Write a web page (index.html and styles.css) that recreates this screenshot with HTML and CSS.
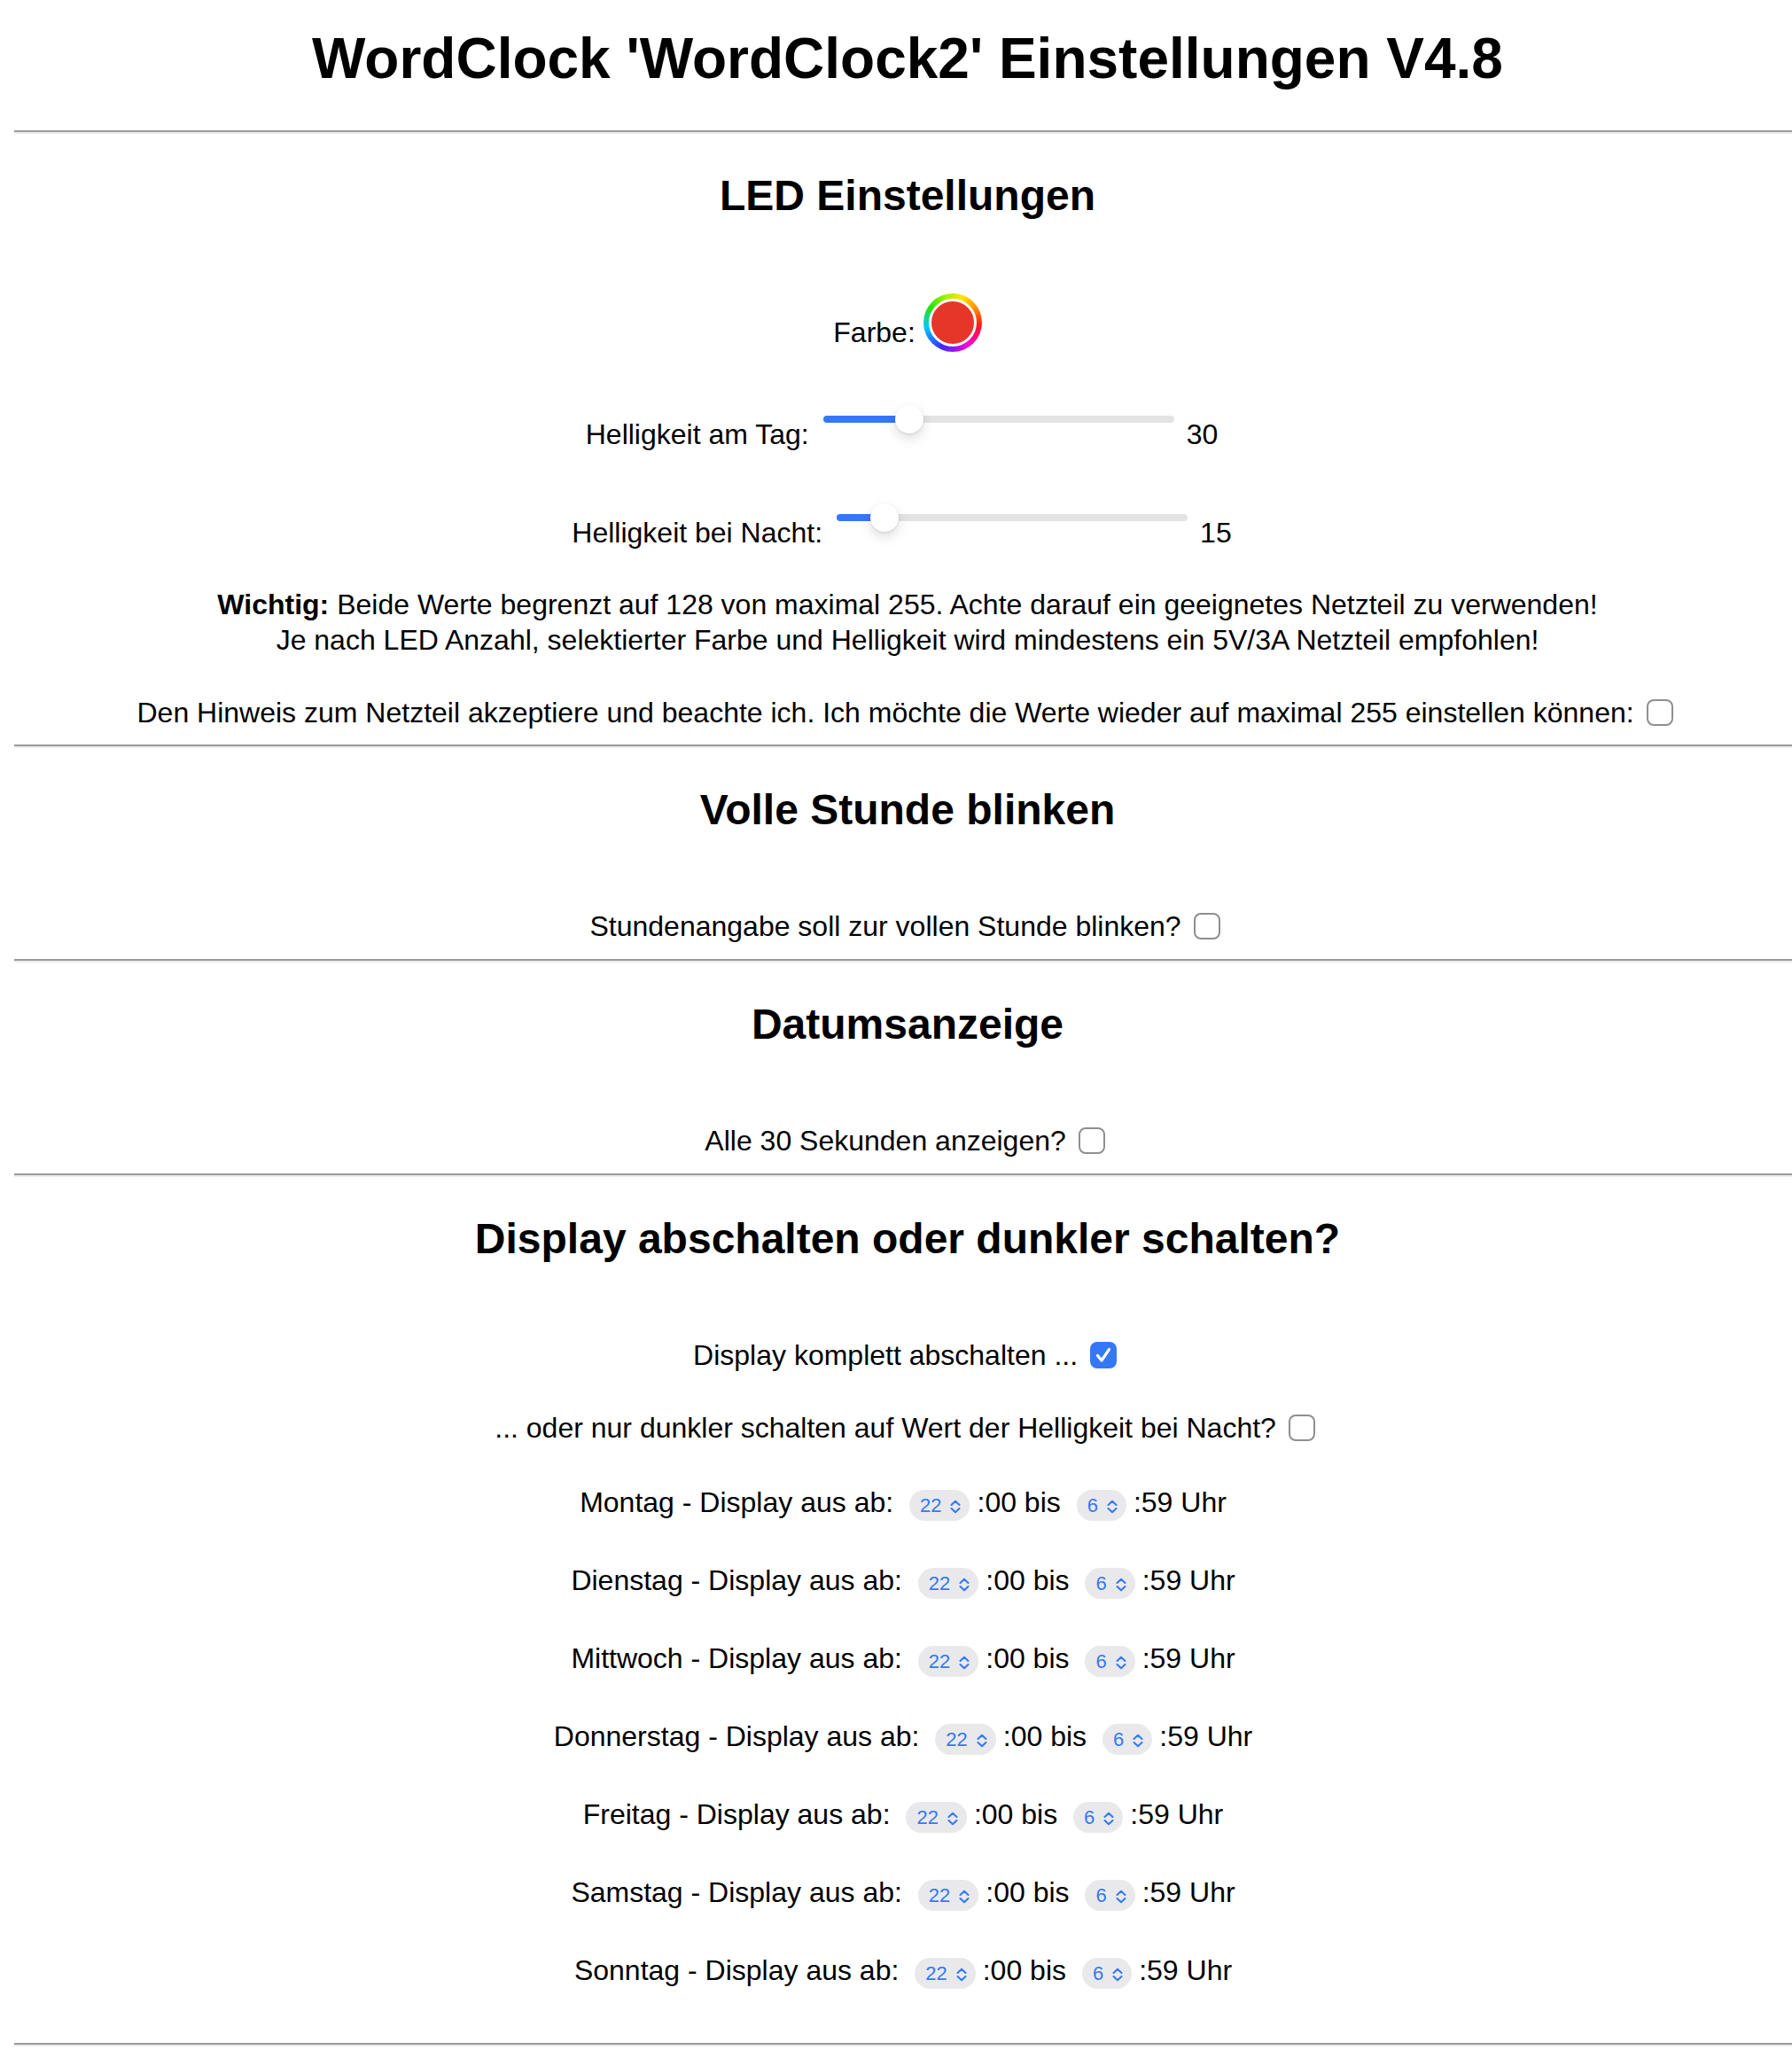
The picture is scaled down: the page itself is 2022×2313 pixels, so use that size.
FILE: index.html
```html
<!DOCTYPE html>
<html lang="de">
<head>
<meta charset="utf-8">
<title>WordClock Einstellungen</title>
<link rel="stylesheet" href="styles.css">
</head>
<body>
<h1 class="title">WordClock 'WordClock2' Einstellungen V4.8</h1>
<hr class="rule rule-first">

<section class="sec">
  <h2 class="sec-title">LED Einstellungen</h2>
  <div class="row row-color">Farbe: <span class="swatch"><span class="swatch-dot"></span></span></div>
  <div class="row row-slider row-day"><span>Helligkeit am Tag:</span><span class="slider" style="--pct: 24.7%"><span class="slider-thumb"></span></span><span>30</span></div>
  <div class="row row-slider row-night"><span>Helligkeit bei Nacht:</span><span class="slider" style="--pct: 13.6%"><span class="slider-thumb"></span></span><span>15</span></div>
  <p class="note"><b>Wichtig:</b> Beide Werte begrenzt auf 128 von maximal 255. Achte darauf ein geeignetes Netzteil zu verwenden!<br>Je nach LED Anzahl, selektierter Farbe und Helligkeit wird mindestens ein 5V/3A Netzteil empfohlen!</p>
  <div class="row row-accept">Den Hinweis zum Netzteil akzeptiere und beachte ich. Ich möchte die Werte wieder auf maximal 255 einstellen können: <span class="check" role="checkbox" aria-checked="false"></span></div>
</section>
<hr class="rule">

<section class="sec">
  <h2 class="sec-title">Volle Stunde blinken</h2>
  <div class="row row-single">Stundenangabe soll zur vollen Stunde blinken? <span class="check" role="checkbox" aria-checked="false"></span></div>
</section>
<hr class="rule rule-tight">

<section class="sec">
  <h2 class="sec-title">Datumsanzeige</h2>
  <div class="row row-single">Alle 30 Sekunden anzeigen? <span class="check" role="checkbox" aria-checked="false"></span></div>
</section>
<hr class="rule rule-tight">

<section class="sec">
  <h2 class="sec-title">Display abschalten oder dunkler schalten?</h2>
  <div class="row row-single">Display komplett abschalten ... <span class="check check-on" role="checkbox" aria-checked="true"><svg viewBox="0 0 30 30" width="30" height="30"><path d="M8.5 15.5 L13 21 L21.5 8.5" fill="none" stroke="#fff" stroke-width="3.2" stroke-linecap="round" stroke-linejoin="round"/></svg></span></div>
  <div class="row row-dim">... oder nur dunkler schalten auf Wert der Helligkeit bei Nacht? <span class="check" role="checkbox" aria-checked="false"></span></div>

  <div class="row row-time row-time-first">Montag - Display aus ab: <span class="select">22<svg class="chev" viewBox="0 0 14 16" width="14" height="16"><path d="M2.5 6 L7 1.8 L11.5 6 M2.5 10 L7 14.2 L11.5 10" fill="none" stroke="#3478f6" stroke-width="2.1" stroke-linecap="round" stroke-linejoin="round"/></svg></span>:00 bis <span class="select">6<svg class="chev" viewBox="0 0 14 16" width="14" height="16"><path d="M2.5 6 L7 1.8 L11.5 6 M2.5 10 L7 14.2 L11.5 10" fill="none" stroke="#3478f6" stroke-width="2.1" stroke-linecap="round" stroke-linejoin="round"/></svg></span>:59 Uhr</div>
  <div class="row row-time">Dienstag - Display aus ab: <span class="select">22<svg class="chev" viewBox="0 0 14 16" width="14" height="16"><path d="M2.5 6 L7 1.8 L11.5 6 M2.5 10 L7 14.2 L11.5 10" fill="none" stroke="#3478f6" stroke-width="2.1" stroke-linecap="round" stroke-linejoin="round"/></svg></span>:00 bis <span class="select">6<svg class="chev" viewBox="0 0 14 16" width="14" height="16"><path d="M2.5 6 L7 1.8 L11.5 6 M2.5 10 L7 14.2 L11.5 10" fill="none" stroke="#3478f6" stroke-width="2.1" stroke-linecap="round" stroke-linejoin="round"/></svg></span>:59 Uhr</div>
  <div class="row row-time">Mittwoch - Display aus ab: <span class="select">22<svg class="chev" viewBox="0 0 14 16" width="14" height="16"><path d="M2.5 6 L7 1.8 L11.5 6 M2.5 10 L7 14.2 L11.5 10" fill="none" stroke="#3478f6" stroke-width="2.1" stroke-linecap="round" stroke-linejoin="round"/></svg></span>:00 bis <span class="select">6<svg class="chev" viewBox="0 0 14 16" width="14" height="16"><path d="M2.5 6 L7 1.8 L11.5 6 M2.5 10 L7 14.2 L11.5 10" fill="none" stroke="#3478f6" stroke-width="2.1" stroke-linecap="round" stroke-linejoin="round"/></svg></span>:59 Uhr</div>
  <div class="row row-time">Donnerstag - Display aus ab: <span class="select">22<svg class="chev" viewBox="0 0 14 16" width="14" height="16"><path d="M2.5 6 L7 1.8 L11.5 6 M2.5 10 L7 14.2 L11.5 10" fill="none" stroke="#3478f6" stroke-width="2.1" stroke-linecap="round" stroke-linejoin="round"/></svg></span>:00 bis <span class="select">6<svg class="chev" viewBox="0 0 14 16" width="14" height="16"><path d="M2.5 6 L7 1.8 L11.5 6 M2.5 10 L7 14.2 L11.5 10" fill="none" stroke="#3478f6" stroke-width="2.1" stroke-linecap="round" stroke-linejoin="round"/></svg></span>:59 Uhr</div>
  <div class="row row-time">Freitag - Display aus ab: <span class="select">22<svg class="chev" viewBox="0 0 14 16" width="14" height="16"><path d="M2.5 6 L7 1.8 L11.5 6 M2.5 10 L7 14.2 L11.5 10" fill="none" stroke="#3478f6" stroke-width="2.1" stroke-linecap="round" stroke-linejoin="round"/></svg></span>:00 bis <span class="select">6<svg class="chev" viewBox="0 0 14 16" width="14" height="16"><path d="M2.5 6 L7 1.8 L11.5 6 M2.5 10 L7 14.2 L11.5 10" fill="none" stroke="#3478f6" stroke-width="2.1" stroke-linecap="round" stroke-linejoin="round"/></svg></span>:59 Uhr</div>
  <div class="row row-time">Samstag - Display aus ab: <span class="select">22<svg class="chev" viewBox="0 0 14 16" width="14" height="16"><path d="M2.5 6 L7 1.8 L11.5 6 M2.5 10 L7 14.2 L11.5 10" fill="none" stroke="#3478f6" stroke-width="2.1" stroke-linecap="round" stroke-linejoin="round"/></svg></span>:00 bis <span class="select">6<svg class="chev" viewBox="0 0 14 16" width="14" height="16"><path d="M2.5 6 L7 1.8 L11.5 6 M2.5 10 L7 14.2 L11.5 10" fill="none" stroke="#3478f6" stroke-width="2.1" stroke-linecap="round" stroke-linejoin="round"/></svg></span>:59 Uhr</div>
  <div class="row row-time">Sonntag - Display aus ab: <span class="select">22<svg class="chev" viewBox="0 0 14 16" width="14" height="16"><path d="M2.5 6 L7 1.8 L11.5 6 M2.5 10 L7 14.2 L11.5 10" fill="none" stroke="#3478f6" stroke-width="2.1" stroke-linecap="round" stroke-linejoin="round"/></svg></span>:00 bis <span class="select">6<svg class="chev" viewBox="0 0 14 16" width="14" height="16"><path d="M2.5 6 L7 1.8 L11.5 6 M2.5 10 L7 14.2 L11.5 10" fill="none" stroke="#3478f6" stroke-width="2.1" stroke-linecap="round" stroke-linejoin="round"/></svg></span>:59 Uhr</div>
</section>
<hr class="rule rule-last">
</body>
</html>
```

FILE: styles.css
```css
html {
  overflow-x: hidden;
  background: #fff;
}

body {
  margin: 0 16px;
  width: 2016px;
  font-family: "Liberation Sans", Arial, Helvetica, sans-serif;
  font-size: 32px;
  color: #000;
  text-align: center;
}

.title {
  font-size: 64px;
  line-height: 74px;
  font-weight: bold;
  margin: 29px 0 44px;
}

.rule {
  height: 0;
  margin: 14px 0 0;
  border: 0;
  border-top: 2px solid #9a9a9a;
  border-bottom: 2px solid #ececec;
}

.rule-first {
  margin-top: 0;
}

.rule-tight {
  margin-top: 15px;
}

.rule-last {
  margin-top: 60px;
}

.sec-title {
  font-size: 48px;
  line-height: 56px;
  font-weight: bold;
  margin: 42px 0 0;
}

.row {
  line-height: 44px;
  white-space: nowrap;
}

/* colour picker row */
.row-color {
  line-height: 37px;
  margin-top: 82px;
}

.swatch {
  display: inline-block;
  box-sizing: border-box;
  width: 66px;
  height: 66px;
  padding: 6px;
  border-radius: 50%;
  vertical-align: -11px;
  background: conic-gradient(from 20deg, #ffe600, #ff8a00 40deg, #ff1a1a 75deg, #ff00d4 125deg, #3b2bff 185deg, #00c8ff 240deg, #27e600 285deg, #a6f000 325deg, #ffe600 360deg);
}

.swatch-dot {
  display: block;
  box-sizing: border-box;
  width: 100%;
  height: 100%;
  border-radius: 50%;
  border: 3px solid #fff;
  background: #e6362a;
}

/* brightness sliders */
.row-slider {
  padding-right: 13px;
}

.row-day {
  margin-top: 71px;
}

.row-night {
  margin-top: 67px;
}

.slider {
  position: relative;
  display: inline-block;
  width: 396px;
  height: 8px;
  margin: 0 14px 0 16px;
  border-radius: 4px;
  vertical-align: 24px;
  background: linear-gradient(to right, #3478f6 var(--pct), #e3e3e3 var(--pct));
}

.slider-thumb {
  position: absolute;
  top: -12px;
  left: calc(var(--pct) - 16px);
  width: 32px;
  height: 32px;
  border-radius: 50%;
  background: #fff;
  box-shadow: 0 6px 14px rgba(0, 0, 0, 0.13), 0 1px 3px rgba(0, 0, 0, 0.10);
}

.note {
  margin: 39px 0 0;
  line-height: 40px;
}

.row-accept {
  margin-top: 40px;
}

.row-single {
  margin-top: 81px;
}

.row-dim {
  margin-top: 38px;
}

/* checkboxes */
.check {
  display: inline-block;
  box-sizing: border-box;
  width: 30px;
  height: 30px;
  margin: 0 6px 0 5px;
  border: 2.5px solid #8f8f8f;
  border-radius: 8px;
  background: #fff;
  vertical-align: -4px;
}

.check-on {
  border: 0;
  background: #3478f6;
}

.check-on svg {
  display: block;
}

/* time selects */
.row-time {
  margin-top: 44px;
  padding-right: 10px;
}

.row-time-first {
  margin-top: 40px;
}

.select {
  display: inline-block;
  height: 35px;
  padding: 0 9px 0 12px;
  margin: 0 8px 0 9px;
  border-radius: 18px;
  background: #e9e9eb;
  color: #3478f6;
  font-size: 22px;
  line-height: 35px;
}

.chev {
  display: inline-block;
  margin-left: 9px;
  vertical-align: -2px;
}
```
